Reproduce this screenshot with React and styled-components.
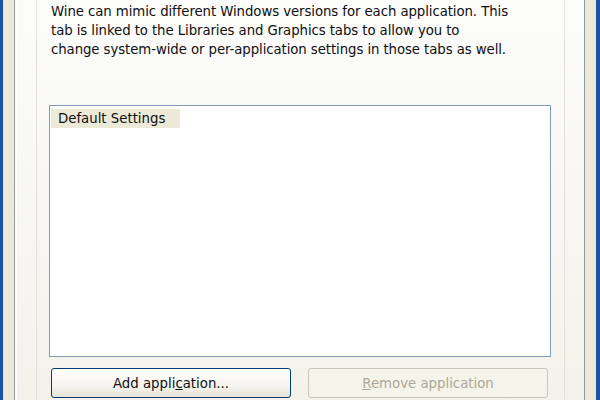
import React from 'react';
import styled, { createGlobalStyle } from 'styled-components';

const GlobalStyle = createGlobalStyle`
  html, body {
    margin: 0;
    padding: 0;
    width: 600px;
    height: 400px;
    overflow: hidden;
  }
  body {
    font-family: "DejaVu Sans", Verdana, sans-serif;
  }
`;

const Frame = styled.div`
  box-sizing: border-box;
  width: 600px;
  height: 400px;
  display: flex;
  background: #ece9d8;
  border-left: 3px solid #1c52a6;
  border-right: 4px solid #1c52a6;
  padding: 0 11px;
`;

const TabPage = styled.div`
  flex: 1;
  display: flex;
  border-left: 1px solid #919b9c;
  border-right: 1px solid #919b9c;
  background: linear-gradient(to bottom, #fcfcfb 0%, #f6f5f0 70%, #f2f1ea 100%);
  padding: 0 19px 0 21px;
  box-shadow: inset 2px 0 0 #ffffff;
`;

const Group = styled.div`
  flex: 1;
  display: flex;
  flex-direction: column;
  border-left: 1px solid #e4e2d8;
  border-right: 1px solid #e4e2d8;
  padding: 0 13px 0 12px;
`;

const Intro = styled.p`
  margin: 2px 0 0 2px;
  font-size: 13.3px;
  line-height: 19px;
  letter-spacing: -0.08px;
  color: #101010;
  white-space: nowrap;
`;

const ListBox = styled.div`
  margin-top: 46px;
  height: 252px;
  box-sizing: border-box;
  border: 1px solid #7f9db9;
  background: #ffffff;
  padding: 2px 0 0 1px;
`;

const ListItem = styled.div`
  display: inline-block;
  width: 129px;
  height: 19px;
  box-sizing: border-box;
  padding-left: 7px;
  font-size: 13.3px;
  line-height: 19px;
  color: #101010;
  background: ${p => (p.selected ? '#ece9d8' : 'transparent')};
`;

const ButtonRow = styled.div`
  display: flex;
  gap: 17px;
  margin-top: 11px;
  padding: 0 0 0 2px;
`;

const Button = styled.button`
  width: 240px;
  height: 30px;
  box-sizing: border-box;
  border-radius: 3px;
  font-family: "DejaVu Sans", Verdana, sans-serif;
  font-size: 13.3px;
  border: 1px solid ${p => (p.disabled ? '#c9c7ba' : '#003c74')};
  color: ${p => (p.disabled ? '#aca899' : '#101010')};
  background: ${p =>
    p.disabled
      ? '#f5f4ea'
      : 'linear-gradient(to bottom, #ffffff 0%, #f5f4ef 60%, #e6e3d6 100%)'};
  padding: 0;
  u {
    text-decoration-thickness: 1px;
  }
`;

export default function App() {
  return (
    <>
      <GlobalStyle />
      <Frame>
        <TabPage>
          <Group>
            <Intro>
              Wine can mimic different Windows versions for each application. This
              <br />
              tab is linked to the Libraries and Graphics tabs to allow you to
              <br />
              change system-wide or per-application settings in those tabs as well.
            </Intro>
            <ListBox>
              <ListItem selected>Default Settings</ListItem>
            </ListBox>
            <ButtonRow>
              <Button>
                Add appli<u>c</u>ation...
              </Button>
              <Button disabled>
                <u>R</u>emove application
              </Button>
            </ButtonRow>
          </Group>
        </TabPage>
      </Frame>
    </>
  );
}
